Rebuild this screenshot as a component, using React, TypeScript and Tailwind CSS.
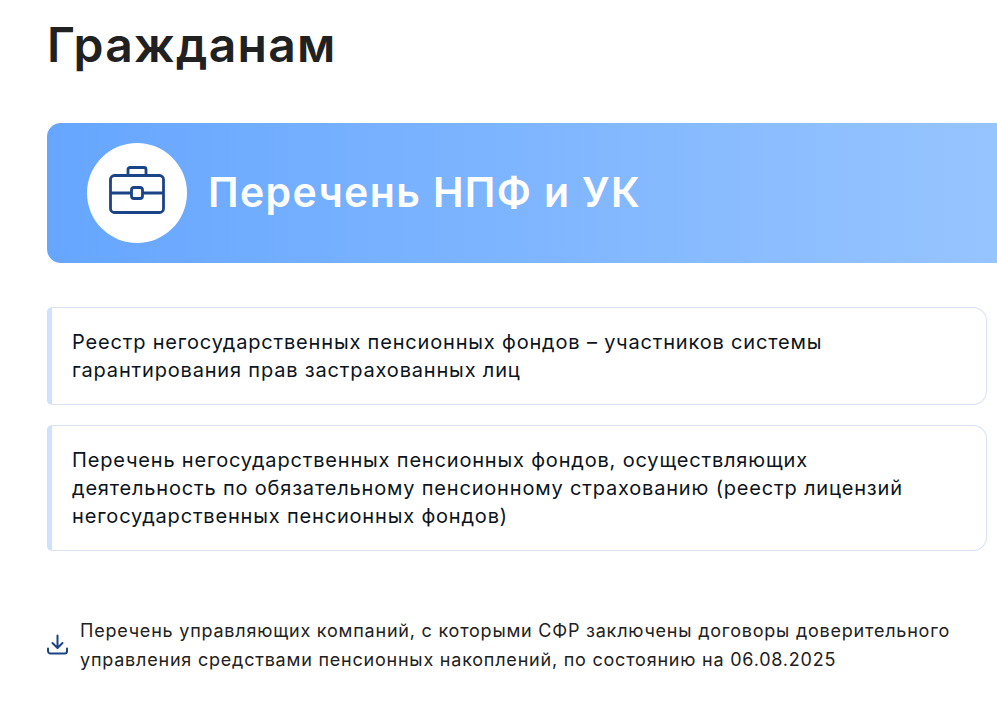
import React from "react";

const BriefcaseIcon = () => (
  <svg className="mb-[6px]" width="56" height="48" viewBox="0 0 56 48" fill="none" stroke="#1b4486" strokeWidth="2.8" strokeLinejoin="round">
    <rect x="1.5" y="9.5" width="53" height="37" rx="4" />
    <path d="M1.5 27h21M33.5 27h21" />
    <rect x="22.5" y="21.5" width="11" height="11" rx="2.5" />
    <path d="M19 9.5V3.5a2 2 0 0 1 2-2h14a2 2 0 0 1 2 2v6" />
  </svg>
);

const DownloadIcon = () => (
  <svg className="mb-[2px] shrink-0" width="21" height="21" viewBox="0 0 21 21" fill="none" stroke="#1b4486" strokeWidth="2" strokeLinecap="round" strokeLinejoin="round">
    <path d="M10.5 1.5v12M5.5 9l5 5 5-5" />
    <path d="M1 14.5v2.5a2.5 2.5 0 0 0 2.5 2.5h14a2.5 2.5 0 0 0 2.5-2.5v-2.5" />
  </svg>
);

const cards = [
  "Реестр негосударственных пенсионных фондов – участников системы гарантирования прав застрахованных лиц",
  "Перечень негосударственных пенсионных фондов, осуществляющих деятельность по обязательному пенсионному страхованию (реестр лицензий негосударственных пенсионных фондов)",
];

export default function App() {
  return (
    <div className="h-[715px] overflow-hidden bg-white pl-[47px] pr-[10px] font-['Inter',sans-serif] text-[#0b1f33]">
      <h1 className="pt-[16px] text-[48px] font-semibold leading-[58px] tracking-[1.3px] text-[#212121]">Гражданам</h1>

      <div className="mt-[49px] -mr-[40px] flex h-[140px] items-center gap-[21px] rounded-l-[14px] bg-gradient-to-r from-[#66a6ff] to-[#98c5ff] pl-[40px]">
        <div className="flex h-[100px] w-[100px] shrink-0 items-center justify-center rounded-full bg-white">
          <BriefcaseIcon />
        </div>
        <div className="text-[41px] font-semibold tracking-[1.35px] text-white">Перечень НПФ и УК</div>
      </div>

      <div className="mt-[44px] flex flex-col gap-[20px]">
        {cards.map((text) => (
          <div
            key={text}
            className="rounded-l-[5px] rounded-r-[14px] border border-l-[5px] border-[#d8e2f2] border-l-[#cfe1fd] py-[20px] pl-[20px] pr-[70px] text-[20px] font-[430] leading-[28px] tracking-[0.82px] text-[#0b1420]"
          >
            {text}
          </div>
        ))}
      </div>

      <div className="mt-[65px] flex items-center gap-[12px]">
        <DownloadIcon />
        <div className="w-[880px] text-[18px] leading-[29px] tracking-[0.78px] text-[#212121]">
          Перечень управляющих компаний, с которыми СФР заключены договоры доверительного управления средствами
          пенсионных накоплений, по состоянию на 06.08.2025
        </div>
      </div>
    </div>
  );
}
